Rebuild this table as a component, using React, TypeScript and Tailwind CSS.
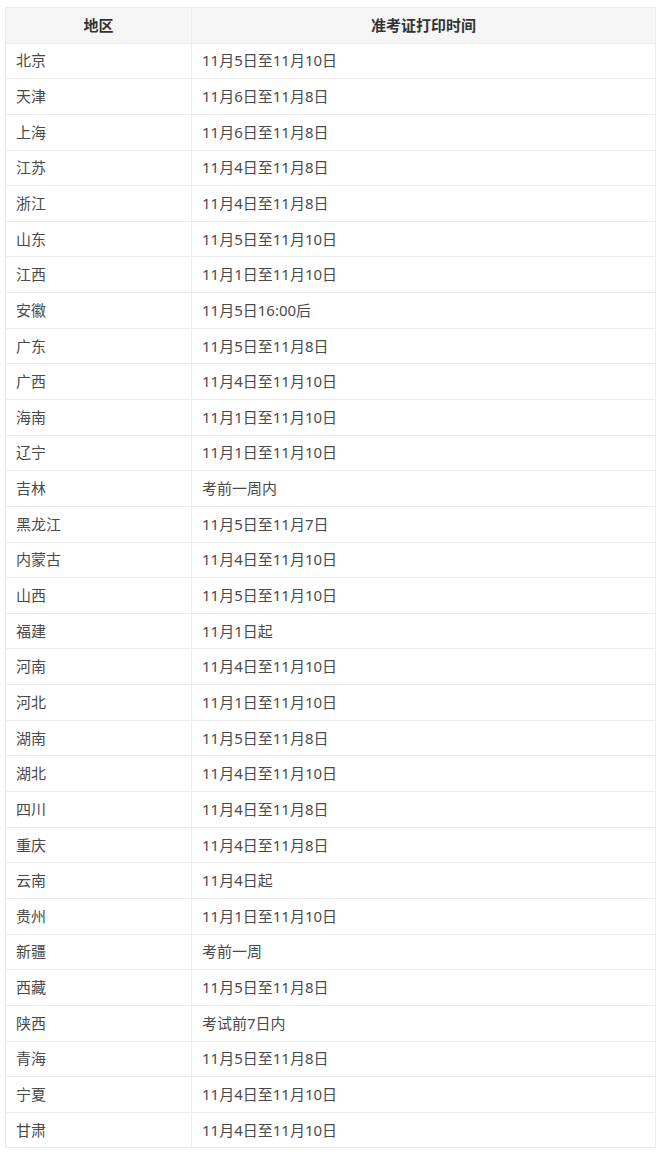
const rows: [string, string][] = [
  ["北京", "11月5日至11月10日"],
  ["天津", "11月6日至11月8日"],
  ["上海", "11月6日至11月8日"],
  ["江苏", "11月4日至11月8日"],
  ["浙江", "11月4日至11月8日"],
  ["山东", "11月5日至11月10日"],
  ["江西", "11月1日至11月10日"],
  ["安徽", "11月5日16:00后"],
  ["广东", "11月5日至11月8日"],
  ["广西", "11月4日至11月10日"],
  ["海南", "11月1日至11月10日"],
  ["辽宁", "11月1日至11月10日"],
  ["吉林", "考前一周内"],
  ["黑龙江", "11月5日至11月7日"],
  ["内蒙古", "11月4日至11月10日"],
  ["山西", "11月5日至11月10日"],
  ["福建", "11月1日起"],
  ["河南", "11月4日至11月10日"],
  ["河北", "11月1日至11月10日"],
  ["湖南", "11月5日至11月8日"],
  ["湖北", "11月4日至11月10日"],
  ["四川", "11月4日至11月8日"],
  ["重庆", "11月4日至11月8日"],
  ["云南", "11月4日起"],
  ["贵州", "11月1日至11月10日"],
  ["新疆", "考前一周"],
  ["西藏", "11月5日至11月8日"],
  ["陕西", "考试前7日内"],
  ["青海", "11月5日至11月8日"],
  ["宁夏", "11月4日至11月10日"],
  ["甘肃", "11月4日至11月10日"],
];

export default function App() {
  return (
    <div
      className="w-[660px] h-[1157px] bg-white pl-[5px] pt-[7px]"
      style={{ fontFamily: '"Noto Sans", "Noto Sans CJK SC", sans-serif' }}
    >
      <table className="w-[651px] border-collapse table-fixed text-[15px] text-[#4a4a4a]">
        <colgroup>
          <col className="w-[186px]" />
          <col />
        </colgroup>
        <thead>
          <tr className="h-[35.6px] bg-[#f5f5f5]">
            <th className="border border-[#ebebeb] text-center font-bold text-[#333]">地区</th>
            <th className="border border-[#ebebeb] text-center font-bold text-[#333]">准考证打印时间</th>
          </tr>
        </thead>
        <tbody>
          {rows.map(([region, time]) => (
            <tr key={region} className="h-[35.65px]">
              <td className="border border-[#ebebeb] px-[10px] py-0 leading-none">{region}</td>
              <td className="border border-[#ebebeb] px-[10px] py-0 leading-none">{time}</td>
            </tr>
          ))}
        </tbody>
      </table>
    </div>
  );
}
